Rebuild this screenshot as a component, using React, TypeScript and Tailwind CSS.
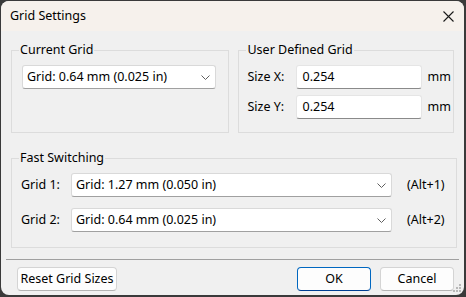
import React from 'react';

const font = { fontFamily: '"Noto Sans", "Open Sans", sans-serif' };

const Chevron = () => (
  <svg width="9" height="5" viewBox="0 0 9 5" className="shrink-0">
    <path d="M0.5 0.5 L4.5 4.5 L8.5 0.5" fill="none" stroke="#5f5f5f" strokeWidth="1" />
  </svg>
);

const Combo: React.FC<{ value: string; className?: string }> = ({ value, className = '' }) => (
  <div
    className={`flex items-center justify-between h-[24px] pl-[4px] pr-[5px] bg-white border border-[#d9d9d9] border-b-[#a0a0a0] rounded-[3px] ${className}`}
  >
    <span className="leading-none">{value}</span>
    <Chevron />
  </div>
);

const TextInput: React.FC<{ value: string }> = ({ value }) => (
  <div className="flex items-center h-[24px] w-[126px] pl-[5px] bg-white border border-[#e5e5e5] border-b-[#8a8a8a] rounded-[3px]">
    <span className="leading-none">{value}</span>
  </div>
);

// fieldset keeps the border gap around the legend; padding goes on the inner box
const Group: React.FC<{ title: string; className?: string; bodyClass?: string; children: React.ReactNode }> = ({
  title,
  className = '',
  bodyClass = '',
  children,
}) => (
  <fieldset className={`border border-[#dcdcdc] ${className}`}>
    <legend className="ml-[7px] px-[1px] leading-[16px] text-[12.5px]">{title}</legend>
    <div className={bodyClass}>{children}</div>
  </fieldset>
);

const Button: React.FC<{ label: string; primary?: boolean; className?: string }> = ({ label, primary, className = '' }) => (
  <button
    className={`h-[24px] rounded-[4px] bg-[#fdfdfd] leading-none text-[12.5px] ${
      primary ? 'border border-[#0067c0] border-b-[#003e92]' : 'border border-[#d4d4d4] border-b-[#b4b4b4]'
    } ${className}`}
  >
    {label}
  </button>
);

const SizeGrip = () => (
  <svg width="10" height="10" viewBox="0 0 10 10" className="absolute right-[2px] bottom-[2px]">
    {[
      [8, 2],
      [5, 5],
      [8, 5],
      [2, 8],
      [5, 8],
      [8, 8],
    ].map(([x, y], i) => (
      <rect key={i} x={x - 1} y={y - 1} width="2" height="2" fill="#b8b8b8" />
    ))}
  </svg>
);

const App: React.FC = () => {
  return (
    <div className="w-[466px] h-[297px] bg-[#3a3a3a] pt-[1px] pl-[1px] pr-[2px] pb-[2px] text-black" style={font}>
      <div className="relative w-full h-full rounded-[8px] overflow-hidden bg-[#f0f0f0] flex flex-col text-[12.5px]">
        {/* title bar */}
        <div className="h-[30px] shrink-0 bg-[#f6f1ec] flex items-center justify-between pl-[9px] pr-[9px]">
          <span className="text-[12.5px] leading-none">Grid Settings</span>
          <svg width="11" height="11" viewBox="0 0 11 11" className="mr-[1px]">
            <path d="M0.5 0.5 L10.5 10.5 M10.5 0.5 L0.5 10.5" stroke="#1a1a1a" strokeWidth="1.1" />
          </svg>
        </div>

        <div className="flex-1 flex flex-col px-[10px] pt-[11px]">
          <div className="flex gap-[9px]">
            <Group title="Current Grid" className="w-[220px] h-[91px]" bodyClass="pl-[10px] pr-[12px] pt-[7px]">
              <Combo value="Grid: 0.64 mm (0.025 in)" />
            </Group>
            <Group title="User Defined Grid" className="w-[217px] h-[91px]" bodyClass="pl-[8px] pt-[7px] flex flex-col gap-[6px]">
              <div className="flex items-center">
                <span className="w-[49px]">Size X:</span>
                <TextInput value="0.254" />
                <span className="ml-[5px]">mm</span>
              </div>
              <div className="flex items-center">
                <span className="w-[49px]">Size Y:</span>
                <TextInput value="0.254" />
                <span className="ml-[5px]">mm</span>
              </div>
            </Group>
          </div>

          <Group
            title="Fast Switching"
            className="mt-[17px] w-[446px] h-[98px]"
            bodyClass="pl-[9px] pt-[7px] flex flex-col gap-[11px]"
          >
            <div className="flex items-center">
              <span className="w-[50px]">Grid 1:</span>
              <Combo value="Grid: 1.27 mm (0.050 in)" className="w-[321px]" />
              <span className="ml-[15px]">(Alt+1)</span>
            </div>
            <div className="flex items-center">
              <span className="w-[50px]">Grid 2:</span>
              <Combo value="Grid: 0.64 mm (0.025 in)" className="w-[321px]" />
              <span className="ml-[15px]">(Alt+2)</span>
            </div>
          </Group>

          <div className="mt-[11px] -mx-[5px] h-px bg-[#a0a0a0]" />

          <div className="flex items-center mt-[7px] pl-[6px]">
            <Button label="Reset Grid Sizes" className="w-[100px]" />
            <Button label="OK" primary className="w-[74px] ml-auto" />
            <Button label="Cancel" className="w-[74px] ml-[9px]" />
          </div>
        </div>
        <SizeGrip />
      </div>
    </div>
  );
};

export default App;
